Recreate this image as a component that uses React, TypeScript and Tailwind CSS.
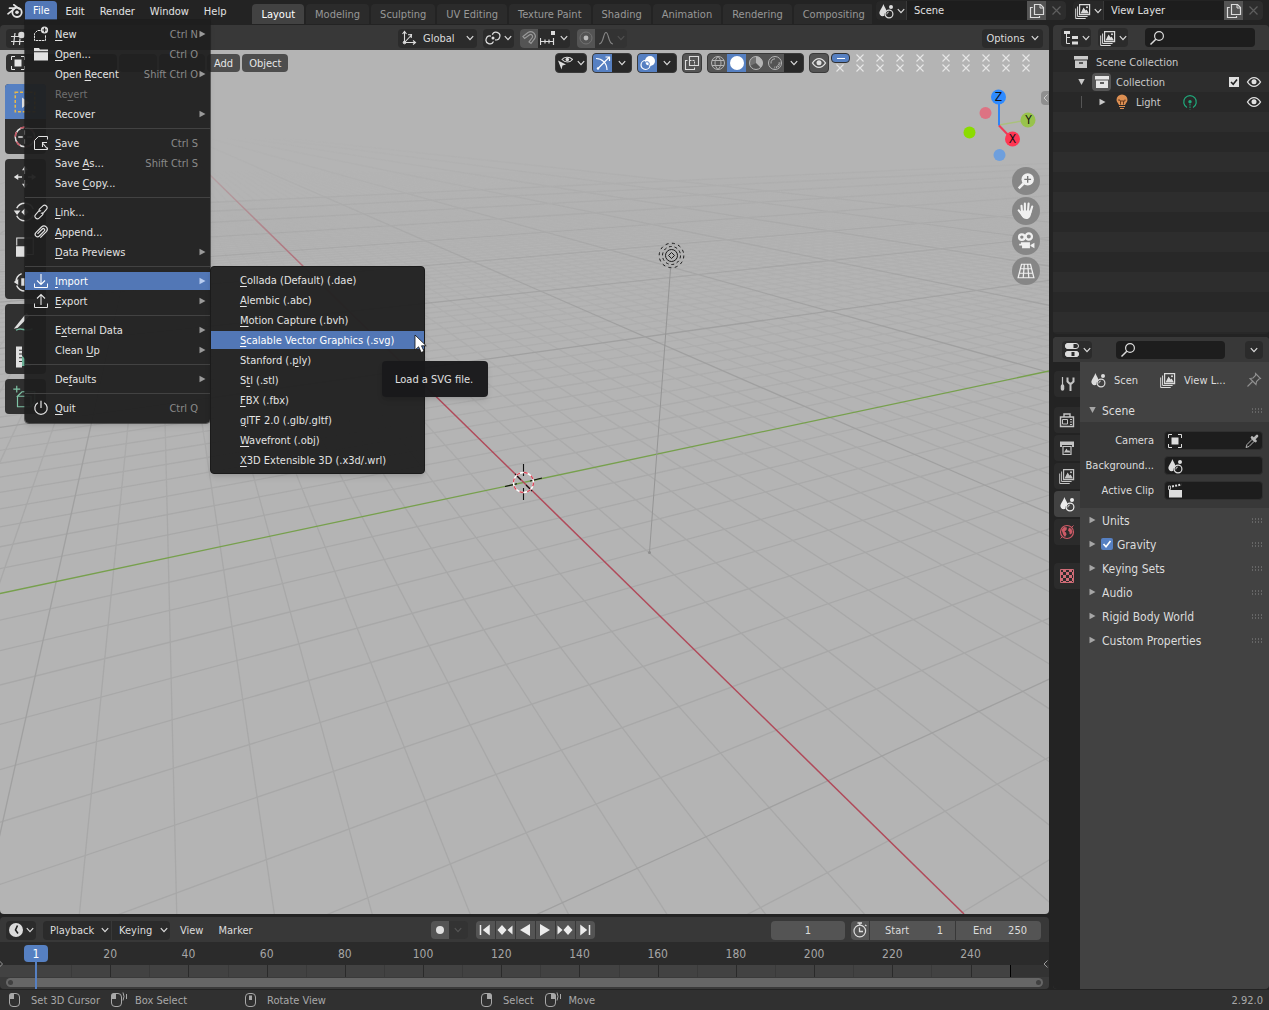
import type { ReactNode } from "react";

type IconProps = { className?: string };

function Svg({
  children,
  className = "",
  size = 16,
}: {
  children: ReactNode;
  className?: string;
  size?: number;
}) {
  return (
    <svg
      width={size}
      height={size}
      viewBox="0 0 16 16"
      fill="none"
      stroke="currentColor"
      strokeWidth="1"
      aria-hidden="true"
      className={`shrink-0 ${className}`}
    >
      {children}
    </svg>
  );
}

function Chevron({ className = "" }: IconProps) {
  return (
    <svg
      width="8"
      height="6"
      viewBox="0 0 8 6"
      fill="none"
      stroke="currentColor"
      strokeWidth="1.2"
      aria-hidden="true"
      className={`shrink-0 ${className}`}
    >
      <path d="M.8 1.2 4 4.600 7.200 1.2" />
    </svg>
  );
}

function Triangle({ className = "" }: IconProps) {
  return (
    <svg width="7" height="8" viewBox="0 0 7 8" aria-hidden="true" className={`shrink-0 ${className}`}>
      <path d="M0.5 0.8 6.5 4 0.5 7.2Z" fill="currentColor" />
    </svg>
  );
}

/* ---------- icons ---------- */

const SceneIcon = ({ className }: IconProps) => (
  <Svg className={className}>
    <path d="M5.5 1C6 3.5 9 6.5 8.2 8.5 7 9.5 6.2 10.6 6.4 12.8 3.5 14 1 12 1.4 9.2 2 7 4.5 4 5.5 1Z" fill="currentColor" stroke="none" />
    <circle cx="11" cy="11" r="3.9" strokeWidth="1.2" />
    <path d="M8.8 11.4a2.3 2.3 0 0 1 2-2.4" strokeWidth=".9" />
    <circle cx="13" cy="4" r="2" fill="currentColor" stroke="none" />
  </Svg>
);

const LayersIcon = ({ className }: IconProps) => (
  <Svg className={className}>
    <path d="M4.6 1.6h10v10h-10z" strokeWidth="1.2" />
    <path d="M2.6 3.5v10h10M.7 5.5v10h10" />
    <path d="M5.5 10.5 8.6 4.4l2 3.2 1-1.2 2.4 4.1Z" fill="currentColor" stroke="none" />
    <circle cx="12" cy="4.2" r="1" fill="currentColor" stroke="none" />
  </Svg>
);

const CopyIcon = () => (
  <Svg>
    <path d="M5.5 1.5h6l3 3v7h-9z" strokeWidth="1.2" />
    <path d="M11 1.5v3.5h3.5" />
    <path d="M3.8 4.5H1.5v10h9v-1.4" strokeWidth="1.2" />
  </Svg>
);

const SearchIcon = () => (
  <Svg>
    <circle cx="10" cy="6" r="4.4" strokeWidth="1.2" />
    <path d="M6.8 9.2 1.5 14.5" strokeWidth="1.5" />
  </Svg>
);

const EyeIcon = ({ className }: IconProps) => (
  <Svg className={className}>
    <path d="M1.5 8C3.5 4.8 5.6 3.6 8 3.6S12.500 4.8 14.500 8C12.500 11.200 10.400 12.400 8 12.400S3.500 11.200 1.500 8Z" strokeWidth="1.4" />
    <circle cx="8" cy="7.800" r="2.500" fill="currentColor" stroke="none" />
  </Svg>
);

const ObjectIcon = () => (
  <Svg>
    <path d="M4.500 4.500h7v7h-7z" fill="currentColor" stroke="none" />
    <path d="M1.500 5V1.500H5M11 1.500h3.500V5M14.500 11v3.500H11M5 14.500H1.500V11" />
  </Svg>
);

const CollectionIcon = () => (
  <Svg>
    <path d="M1 2h14v3.500H1zM2 6.500h12V14H2z" fill="currentColor" stroke="none" />
    <path d="M6 9h4" stroke="#303030" strokeWidth="1.600" />
  </Svg>
);

const menuIcons: Record<string, ReactNode> = {
  new: (
    <Svg>
      <path d="M7.500 4.500H4.500L1.500 7.500v7h11V9" strokeWidth="1" strokeDasharray="2.500 .6" />
      <circle cx="11.500" cy="4" r="3.600" fill="currentColor" stroke="none" />
      <path d="M11.500 1.800v4.400M9.300 4h4.400" stroke="#242424" strokeWidth="1.200" />
    </Svg>
  ),
  open: (
    <Svg>
      <path d="M1 2h5l1 1.500h8v1.700H1zM1 6.200h14V14.500H1z" fill="currentColor" stroke="none" />
    </Svg>
  ),
  save: (
    <Svg>
      <path d="M14.500 4.500v-3h-9l-4 4v9h13v-2" />
      <path d="M14 13.500 10 8.500M9.500 12V7.500H14" strokeWidth="1.100" />
    </Svg>
  ),
  link: (
    <Svg>
      <path d="M6.500 7.500C5.800 6.500 6 5.500 6.700 4.800L9.900 1.900c1-.9 2.400-.9 3.400.1s1 2.400.1 3.400L10.600 8.600C9.800 9.300 8.800 9.500 7.900 9" strokeWidth="1.100" />
      <path d="M9.500 8.500c.7 1 .5 2-.2 2.700L6.100 14.100c-1 .9-2.400.9-3.400-.1s-1-2.400-.1-3.400L5.400 7.400C6.200 6.700 7.200 6.500 8.100 7" strokeWidth="1.100" />
    </Svg>
  ),
  append: (
    <Svg>
      <path d="M4.500 9.800 9.300 5c1.300-1.300 3.200.5 2 1.900L6.300 12c-2.300 2.200-5.600-.9-3.400-3.300L8.500 3c3.200-3 7.700 1.100 4.800 4.600L7.300 13.700" strokeWidth="1.200" />
    </Svg>
  ),
  import: (
    <Svg>
      <path d="M8 1v10M4 7.500 8 11.500 12 7.500" strokeWidth="1.100" />
      <path d="M1.500 10.500v4h13v-4" strokeWidth="1" />
    </Svg>
  ),
  export: (
    <Svg>
      <path d="M8 12V1.500M4 5.500 8 1.500 12 5.500" strokeWidth="1.100" />
      <path d="M1.500 10.500v4h13v-4" strokeWidth="1" />
    </Svg>
  ),
  quit: (
    <Svg>
      <path d="M8 .8V8M4.800 2.800a6.200 6.200 0 1 0 6.400 0" strokeWidth="1.200" />
    </Svg>
  ),
};

/* ---------- menus ---------- */

type MenuItem = {
  label: string;
  mark?: number;
  icon?: string;
  keys?: string;
  sub?: boolean;
  disabled?: boolean;
};

const fileMenu: MenuItem[][] = [
  [
    { label: "New", mark: 0, icon: "new", keys: "Ctrl N", sub: true },
    { label: "Open...", mark: 0, icon: "open", keys: "Ctrl O" },
    { label: "Open Recent", mark: 5, keys: "Shift Ctrl O", sub: true },
    { label: "Revert", mark: 2, disabled: true },
    { label: "Recover", sub: true },
  ],
  [
    { label: "Save", mark: 0, icon: "save", keys: "Ctrl S" },
    { label: "Save As...", mark: 5, keys: "Shift Ctrl S" },
    { label: "Save Copy...", mark: 5 },
  ],
  [
    { label: "Link...", mark: 0, icon: "link" },
    { label: "Append...", mark: 0, icon: "append" },
    { label: "Data Previews", mark: 0, sub: true },
  ],
  [
    { label: "Import", mark: 0, icon: "import", sub: true },
    { label: "Export", mark: 0, icon: "export", sub: true },
  ],
  [
    { label: "External Data", mark: 1, sub: true },
    { label: "Clean Up", mark: 6, sub: true },
  ],
  [{ label: "Defaults", mark: 2, sub: true }],
  [{ label: "Quit", mark: 0, icon: "quit", keys: "Ctrl Q" }],
];

const importMenu: MenuItem[] = [
  { label: "Collada (Default) (.dae)", mark: 0 },
  { label: "Alembic (.abc)", mark: 0 },
  { label: "Motion Capture (.bvh)", mark: 0 },
  { label: "Scalable Vector Graphics (.svg)", mark: 0 },
  { label: "Stanford (.ply)", mark: 11 },
  { label: "Stl (.stl)", mark: 1 },
  { label: "FBX (.fbx)", mark: 0 },
  { label: "glTF 2.0 (.glb/.gltf)", mark: 0 },
  { label: "Wavefront (.obj)", mark: 0 },
  { label: "X3D Extensible 3D (.x3d/.wrl)", mark: 0 },
];

function MarkedLabel({ label, mark }: { label: string; mark?: number }) {
  if (mark === undefined) return <span>{label}</span>;
  return (
    <span>
      {label.slice(0, mark)}
      <u className="underline decoration-1 underline-offset-2">{label[mark]}</u>
      {label.slice(mark + 1)}
    </span>
  );
}

function ImportMenu() {
  return (
    <div className="absolute left-full -top-[5px] flex w-[215px] flex-col gap-[2px] rounded border border-[#1b1b1b] bg-[#242424]/98 py-1 shadow-md">
      {importMenu.map((item) => {
        const active = item.label.startsWith("Scalable");
        return (
          <button
            key={item.label}
            className={`relative flex h-[18px] w-full items-center pl-[29px] text-left whitespace-nowrap ${
              active ? "z-10 bg-[#5277b6] text-white" : "text-[#e3e3e3]"
            }`}
          >
            <MarkedLabel label={item.label} mark={item.mark} />
            {active && (
              <>
                <span
                  role="tooltip"
                  className="absolute top-[30px] left-[171px] flex h-9 items-center rounded bg-[#1a1a1c]/98 pr-[15px] pl-[13px] text-[#e0e0e0] shadow-md"
                >
                  Load a SVG file.
                </span>
                <svg width="13" height="20" viewBox="0 0 13 20" aria-hidden="true" className="absolute top-[3px] left-[203px]">
                  <path d="M1 1v15l3.600-3.200L7.200 18.500l2.800-1.200L7.500 11.800h4.700Z" fill="#fff" stroke="#111" strokeWidth=".8" />
                </svg>
              </>
            )}
          </button>
        );
      })}
    </div>
  );
}

function FileMenu() {
  return (
    <div className="absolute top-full left-0 z-20 w-[185px] rounded-b bg-[#1f1f1f]/95 pt-1 pb-[5px] shadow-md ring-1 ring-[#1b1b1b]/60">
      {fileMenu.map((group, i) => (
        <div key={i}>
          {i > 0 && <div className="mt-1 mb-1 h-px bg-[#424242]" />}
          {group.map((item) => {
            const active = item.label === "Import";
            return (
              <div key={item.label} className="relative py-px">
                <button
                  disabled={item.disabled}
                  className={`flex h-[18px] w-full items-center pr-1 pl-2 ${
                    active ? "bg-[#5277b6] text-white" : item.disabled ? "text-[#707070]" : "text-[#e3e3e3]"
                  }`}
                >
                  <span className="flex w-[22px]">{item.icon && menuIcons[item.icon]}</span>
                  <MarkedLabel label={item.label} mark={item.mark} />
                  <span className="mr-px ml-auto text-[#8a8a8a]">{item.keys}</span>
                  <span className={`w-[7px] ${active ? "text-[#b9cdf0]" : "text-[#9a9a9a]"}`}>
                    {item.sub && <Triangle />}
                  </span>
                </button>
                {active && <ImportMenu />}
              </div>
            );
          })}
        </div>
      ))}
    </div>
  );
}

/* ---------- top bar ---------- */

const workspaces = [
  "Layout",
  "Modeling",
  "Sculpting",
  "UV Editing",
  "Texture Paint",
  "Shading",
  "Animation",
  "Rendering",
  "Compositing",
];

function DataSelector({ icon, value, label }: { icon: ReactNode; value: string; label: string }) {
  return (
    <div className="flex h-[19px] overflow-hidden rounded bg-[#1d1d1d] text-[#dcdcdc]">
      <button aria-label={`Browse ${label}`} className="flex w-[31px] items-center justify-center gap-[3px] border-r border-[#383838] bg-[#282828]">
        {icon}
        <Chevron />
      </button>
      <input aria-label={label} defaultValue={value} className="w-[120px] bg-[#1d1d1d] px-[7px] text-[#e0e0e0] outline-none" />
      <button aria-label={`New ${label}`} className="flex w-[19px] items-center justify-center bg-[#545454]">
        <CopyIcon />
      </button>
      <button aria-label={`Remove ${label}`} className="flex w-5 items-center justify-center bg-[#2d2d2d] text-[#5e5e5e]">
        <svg width="9" height="9" viewBox="0 0 9 9" stroke="currentColor" strokeWidth="1.200" aria-hidden="true">
          <path d="M.5.5l8 8M8.500.5l-8 8" />
        </svg>
      </button>
    </div>
  );
}

function TopBar() {
  return (
    <header className="flex h-[25px] shrink-0 bg-[#232323] text-[#e3e3e3]">
      <button aria-label="Blender" className="flex h-[22px] w-[25px] items-center justify-end pr-[2px]">
        <Svg>
          <path d="M1 10.800 8.200 5.200H2.500M6.800 1.800l5.500 4.200" strokeWidth="1.700" strokeLinecap="round" />
          <circle cx="10" cy="9.300" r="4.700" strokeWidth="1.800" />
          <circle cx="10" cy="9.300" r="1.800" fill="currentColor" stroke="none" />
        </Svg>
      </button>
      <nav className="flex h-[22px] gap-px">
        <div className="relative h-5 pt-px">
          <button className="h-[19px] rounded-t bg-[#5277b6] px-2 text-white">File</button>
          <FileMenu />
        </div>
        {["Edit", "Render", "Window", "Help"].map((m) => (
          <button key={m} className="px-[7px]">
            {m}
          </button>
        ))}
      </nav>
      <div className="ml-[19px] flex min-w-0 flex-1 items-start gap-[2px] overflow-hidden pt-1">
        {workspaces.map((w) => (
          <button
            key={w}
            className={`h-5 shrink-0 rounded-t px-[9px] ${
              w === "Layout" ? "bg-[#424242] text-white" : "bg-[#2b2b2b] text-[#989898]"
            }`}
          >
            {w}
          </button>
        ))}
      </div>
      <div className="flex shrink-0 gap-[7px] pt-px pr-[6px] pl-1">
        <DataSelector icon={<SceneIcon />} value="Scene" label="Scene" />
        <DataSelector icon={<LayersIcon />} value="View Layer" label="View Layer" />
      </div>
    </header>
  );
}

/* ---------- 3D viewport ---------- */

const origin = { x: 523, y: 482 };
const vanishX = { x: 158, y: 124 };
const vanishY = { x: 2300, y: 105 };

// point at `t` units from the origin, on the axis that runs to `v`
function project(v: { x: number; y: number }, w: number, t: number) {
  const k = (w * t) / (1 + w * t);
  return { x: origin.x + k * (v.x - origin.x), y: origin.y + k * (v.y - origin.y) };
}

function floorLines(v: { x: number; y: number }, w: number, from: number, to: number, target: { x: number; y: number }) {
  const out: { t: number; x1: number; y1: number; x2: number; y2: number }[] = [];
  for (let t = from; t <= to; t++) {
    if (t === 0) continue;
    const p = project(v, w, t);
    const far = 6;
    out.push({
      t,
      x1: target.x,
      y1: target.y,
      x2: target.x + (p.x - target.x) * far,
      y2: target.y + (p.y - target.y) * far,
    });
  }
  return out;
}

const floor = [
  ...floorLines(vanishX, -0.0455, -80, 16, vanishY),
  ...floorLines(vanishY, 0.0208, -38, 60, vanishX),
];

function Scene() {
  const minor = floor.filter((l) => l.t % 10 !== 0);
  const major = floor.filter((l) => l.t % 10 === 0);
  return (
    <svg
      viewBox="0 50 1049 864"
      preserveAspectRatio="xMinYMin slice"
      className="absolute inset-0 h-full w-full"
      aria-hidden="true"
    >
      <defs>
        <linearGradient id="nearFade" gradientUnits="userSpaceOnUse" x1="0" y1="170" x2="0" y2="520">
          <stop offset="0" stopColor="#000" />
          <stop offset=".3" stopColor="#555" />
          <stop offset="1" stopColor="#fff" />
        </linearGradient>
        <linearGradient id="farFade" gradientUnits="userSpaceOnUse" x1="0" y1="138" x2="0" y2="330">
          <stop offset="0" stopColor="#000" />
          <stop offset=".5" stopColor="#777" />
          <stop offset="1" stopColor="#fff" />
        </linearGradient>
        <mask id="nearMask" maskUnits="userSpaceOnUse" x="0" y="0" width="1400" height="1400">
          <rect width="1400" height="1400" fill="url(#nearFade)" />
        </mask>
        <mask id="farMask" maskUnits="userSpaceOnUse" x="0" y="0" width="1400" height="1400">
          <rect width="1400" height="1400" fill="url(#farFade)" />
        </mask>
      </defs>
      <g mask="url(#nearMask)" stroke="#a8a8a8" strokeWidth="1.300">
        {minor.map((l, i) => (
          <line key={i} x1={l.x1} y1={l.y1} x2={l.x2} y2={l.y2} />
        ))}
      </g>
      <g mask="url(#farMask)">
        {major.map((l, i) => (
          <line key={i} x1={l.x1} y1={l.y1} x2={l.x2} y2={l.y2} stroke="#a0a0a0" strokeWidth="1.300" />
        ))}
        <path d="M0 593.500 1049 371" stroke="#77a04d" strokeWidth="1.300" />
        <path d="M158 124 964 914" stroke="#b04a5a" strokeWidth="1.500" />
      </g>
      {/* light and its drop line */}
      <path d="M670.500 269 649.500 552" stroke="#959595" />
      <circle cx="649.500" cy="552.500" r="1.500" fill="#8e8e8e" />
      <g fill="none" stroke="#1c1c1c">
        <path d="M671.500 252.500l3 3-3 3-3-3Z" />
        <circle cx="671.500" cy="255.500" r="6" />
        <circle cx="671.500" cy="255.500" r="9" strokeDasharray="3 2.650" />
        <circle cx="671.500" cy="255.500" r="12.300" strokeDasharray="3 3.440" />
      </g>
      {/* 3D cursor */}
      <path d="M523.500 464v12M523.500 488v12M505 486.500l12-2.700M530 481l12-3M515 474l6 6M526 485l6 6" stroke="#111" strokeWidth="1.100" />
      <circle cx="523.500" cy="482.500" r="10" fill="none" stroke="#fff" strokeWidth="1.400" />
      <circle cx="523.500" cy="482.500" r="10" fill="none" stroke="#d94a5a" strokeWidth="1.400" strokeDasharray="3.930 3.930" />
    </svg>
  );
}

function ViewportHeader() {
  return (
    <div className="flex h-[25px] shrink-0 items-center rounded-t bg-[#383838] pt-px pr-[6px] pl-[6px] text-[#dcdcdc]">
      <div className="flex w-[392px] items-center">
        <button aria-label="Editor type" className="flex h-[19px] w-[30px] items-center gap-1 rounded bg-[#2b2b2b] pl-1">
          <Svg>
            <path d="M1 6.500h8M1 11.500h13M5 3 3.500 15M10 8.500 9.500 15" strokeWidth="1.200" />
            <circle cx="11.500" cy="5" r="3.300" fill="currentColor" stroke="none" />
          </Svg>
        </button>
      </div>
      <label className="relative flex h-[19px] items-center rounded bg-[#2b2b2b]">
        <Svg className="pointer-events-none absolute left-[3px]">
          <path d="M3.500 2v10.500H14M1.500 4 3.500 1.500 5.500 4M12 10.500l2.500 2-2.500 2M3.500 12.500 10 5.500M7 4.800l3.500-.3-.3 3.500" strokeWidth="1.100" />
          <circle cx="3.500" cy="12.500" r="1.300" fill="currentColor" />
        </Svg>
        <select aria-label="Transform orientation" className="h-[19px] w-[79px] appearance-none bg-transparent pl-[25px] outline-none">
          <option>Global</option>
        </select>
        <Chevron className="pointer-events-none absolute right-[3px]" />
      </label>
      <button aria-label="Pivot point" className="ml-[6px] flex h-[19px] w-[31px] items-center justify-center gap-[3px] rounded bg-[#2b2b2b]">
        <Svg>
          <path d="M8.500 11.500A3.900 3.900 0 1 1 6 6.200M7.300 4.700A3.900 3.900 0 1 1 10 9.800" strokeWidth="1.200" />
          <circle cx="8" cy="8" r="1.500" fill="currentColor" stroke="none" />
        </Svg>
        <Chevron />
      </button>
      <div className="ml-[6px] flex h-[19px] overflow-hidden rounded bg-[#2b2b2b]">
        <button aria-label="Snap" className="flex w-[18px] items-center justify-center bg-[#545454] text-[#999]">
          <Svg>
            <path d="M2 6.500 7 2.500c5-3 9.500 3 6 7L10 13.500 8 11.800l3-3.800c1.500-2.300-.5-4.500-2.700-3L3.600 8.400Z" strokeWidth="1.200" />
          </Svg>
        </button>
        <button aria-label="Snap to" className="flex w-8 items-center justify-center gap-[4px]">
          <Svg>
            <path d="M.5 11.500h13M.5 8v7M5 9.500v4M9 9.500v4M13.500 8v7" strokeWidth="1.200" />
            <path d="M11 1h4v4h-4z" fill="currentColor" stroke="none" />
          </Svg>
          <Chevron />
        </button>
      </div>
      <div className="ml-[7px] flex h-[19px] overflow-hidden rounded bg-[#333]">
        <button aria-label="Proportional editing" className="flex w-[18px] items-center justify-center bg-[#545454] text-[#727272]">
          <Svg>
            <circle cx="8" cy="8" r="6" />
            <circle cx="8" cy="8" r="2.400" fill="#bbb" stroke="none" />
          </Svg>
        </button>
        <button aria-label="Falloff" className="flex w-8 items-center justify-center gap-[3px] text-[#858585]">
          <Svg>
            <path d="M1 14C6 14 5 2.500 8 2.500S10 14 15 14" strokeWidth="1.200" />
          </Svg>
          <Chevron className="text-[#505050]" />
        </button>
      </div>
      <button className="ml-auto flex h-[19px] w-[61px] items-center justify-center gap-[6px] rounded bg-[#2b2b2b]">
        Options
        <Chevron />
      </button>
    </div>
  );
}

function Cross() {
  return (
    <svg width="8" height="8" viewBox="0 0 8 8" stroke="#e6e6e6" strokeWidth="1.100" aria-hidden="true">
      <path d="M.5.5l7 7M7.500.5l-7 7" />
    </svg>
  );
}

function LayerButtons() {
  const block = (first: boolean) => (
    <div className="grid grid-cols-5 gap-x-3 gap-y-[2px]">
      {Array.from({ length: 10 }, (_, i) => (
        <button key={i} aria-label="Layer" className="relative flex h-2 w-2 items-center justify-center">
          {first && i === 0 ? (
            <span className="absolute -top-px -left-[5px] flex h-[10px] w-[19px] items-center justify-center rounded border border-[#303030] bg-[#5680c2]">
              <span className="h-px w-2 bg-white" />
            </span>
          ) : (
            <Cross />
          )}
        </button>
      ))}
    </div>
  );
  return (
    <div className="ml-[7px] flex gap-[18px]">
      {block(true)}
      {block(false)}
    </div>
  );
}

function ViewportTools() {
  const group = "flex h-5 overflow-hidden rounded border border-[#3a3a3a] bg-[#282828] text-[#dcdcdc]";
  const cell = "flex w-[19px] items-center justify-center";
  return (
    <div className="relative flex items-center pt-[3px] pr-[19px] pl-[6px]">
      <div className="flex gap-[2px] text-[#e6e6e6]">
        <button aria-label="Interaction mode" className="flex h-[18px] w-[111px] items-center rounded bg-[#303030] pl-1">
          <ObjectIcon />
        </button>
        <button aria-label="View" className="h-[18px] w-[38px] rounded bg-[#4d4d4d]" />
        <button aria-label="Select" className="h-[18px] w-[46px] rounded bg-[#4d4d4d]" />
        <button className="h-[18px] rounded bg-[#4d4d4d] px-[7px]">Add</button>
        <button className="h-[18px] rounded bg-[#4d4d4d] px-[7px]">Object</button>
      </div>
      <div className="ml-auto flex items-center">
        <button aria-label="Object types" className={`${group} w-8 items-center justify-center gap-1`}>
          <Svg>
            <path d="M5 4.500C7 1.800 12.500 1.300 15.500 4.500 13 7.800 8 7.800 5 4.500Z" strokeWidth="1.100" />
            <circle cx="10.300" cy="4.500" r="1.800" fill="currentColor" stroke="none" />
            <path d="M1 5.500 9 9.500 5.500 10.500 4.500 14.500Z" fill="currentColor" stroke="none" />
          </Svg>
          <Chevron />
        </button>
        <div className={`${group} ml-[5px]`}>
          <button aria-label="Gizmos" className={`${cell} bg-[#5680c2] text-white`}>
            <Svg>
              <path d="M1 3.500C7 3.500 12 8 12 15M3 13.500 14 2.500M10.500 2h4v4" strokeWidth="1.200" />
              <circle cx="3" cy="13.500" r="1.200" fill="currentColor" stroke="none" />
            </Svg>
          </button>
          <button aria-label="Gizmo options" className={cell}>
            <Chevron />
          </button>
        </div>
        <div className={`${group} ml-[5px]`}>
          <button aria-label="Overlays" className={`${cell} bg-[#5680c2] text-white`}>
            <Svg>
              <circle cx="10" cy="6" r="5" fill="currentColor" stroke="none" />
              <circle cx="5.500" cy="10" r="4.500" strokeWidth="1.200" />
              <circle cx="7" cy="9" r="2.300" stroke="#5680c2" />
            </Svg>
          </button>
          <button aria-label="Overlay options" className={cell}>
            <Chevron />
          </button>
        </div>
        <button aria-label="Toggle X-ray" className="ml-[5px] flex h-5 w-5 items-center justify-center rounded border border-[#3a3a3a] bg-[#545454] text-[#dcdcdc]">
          <Svg>
            <path d="M5.500 1.500h9v9h-9zM3.500 5.500h-2v9h9v-2" strokeWidth="1.100" />
            <path d="M5.500 5.500h5v5" strokeDasharray="2 1" />
          </Svg>
        </button>
        <div className={`${group} ml-[5px]`}>
          <button aria-label="Wireframe" className={`${cell} bg-[#545454] text-[#b5b5b5]`}>
            <Svg>
              <circle cx="8" cy="8" r="6.500" />
              <path d="M8 1.500c-4 4-4 9 0 13M8 1.500c4 4 4 9 0 13M2 5.500h12M2 10.500h12" />
            </Svg>
          </button>
          <button aria-label="Solid" className={`${cell} bg-[#5680c2] text-white`}>
            <Svg>
              <circle cx="8" cy="8" r="7" fill="currentColor" stroke="none" />
            </Svg>
          </button>
          <button aria-label="Material preview" className={`${cell} bg-[#545454] text-[#b5b5b5]`}>
            <Svg>
              <circle cx="8" cy="8" r="6.500" />
              <path d="M8 8V1.500A6.500 6.500 0 0 0 2 11L8 8Z" fill="currentColor" stroke="none" opacity=".3" />
              <path d="M8 8V1.500A6.500 6.500 0 0 1 12.600 12.600Z" fill="currentColor" stroke="none" />
            </Svg>
          </button>
          <button aria-label="Rendered" className={`${cell} bg-[#545454] text-[#b5b5b5]`}>
            <Svg>
              <circle cx="8" cy="8" r="6.500" />
              <path d="M4 8.500A4.500 4.500 0 0 1 8 3.800" />
              <path d="M12.500 7.500c0 3-2 5-5 5" strokeWidth="2" strokeDasharray="1 .8" />
            </Svg>
          </button>
          <button aria-label="Shading options" className={cell}>
            <Chevron />
          </button>
        </div>
        <button aria-label="Local collections" className="ml-[5px] flex h-5 w-5 items-center justify-center rounded border border-[#3a3a3a] bg-[#545454] text-[#e0e0e0]">
          <EyeIcon />
        </button>
        <LayerButtons />
      </div>
    </div>
  );
}

const toolGroups: ReactNode[][] = [
  [
    <Svg size={24} key="select">
      <path d="M1.500 1.500h13v13h-13z" stroke="#e6b74c" strokeDasharray="2 1.200" />
      <path d="M6 5v7l5-3.500Z" fill="currentColor" stroke="none" />
    </Svg>,
    <Svg size={24} key="cursor">
      <circle cx="8" cy="8" r="6.500" />
      <circle cx="8" cy="8" r="6.500" stroke="#c65361" strokeDasharray="3.400 3.400" />
      <path d="M3.500 8h3M9.500 8h3M8 3.500v3M8 9.500v3" />
    </Svg>,
  ],
  [
    <Svg size={24} key="move">
      <path d="M2 8h4M10 8h4M8 2v4M8 10v4" />
      <path d="M.5 8 3.500 6v4ZM15.500 8l-3-2v4ZM8 .5 6 3.500h4ZM8 15.500l-2-3h4Z" fill="currentColor" stroke="none" />
    </Svg>,
    <Svg size={24} key="rotate">
      <path d="M2.500 10.500A6 6 0 0 0 13.500 10M2.500 5.500A6 6 0 0 1 13.500 6" />
      <path d="M.5 7h4.500L2.700 10ZM8 5.500 10.500 8 8 10.500 5.500 8Z" fill="currentColor" stroke="none" />
    </Svg>,
    <Svg size={24} key="scale">
      <path d="M2.500 7V2h11v11H9" strokeWidth=".7" />
      <path d="M2 7.500h7v7H2z" fill="currentColor" stroke="none" />
    </Svg>,
    <Svg size={24} key="transform">
      <circle cx="8" cy="8" r="6" strokeDasharray="7 2.400" />
      <path d="M5.500 5.500h5v5h-5zM.5 8l3-2v4Z" fill="currentColor" stroke="none" />
    </Svg>,
  ],
  [
    <Svg size={24} key="annotate">
      <path d="M.5 12.500 9 2l2 2L3 12Z" fill="currentColor" stroke="none" />
      <path d="M2 13.500c4-3 6 2 11-1" stroke="#6fb59a" />
    </Svg>,
    <Svg size={24} key="measure">
      <path d="M2 1h4v14H2z" fill="currentColor" stroke="none" />
      <path d="M4 3.500h3M4 6h3M4 8.500h3M4 11h3" stroke="#333" strokeWidth=".7" />
      <path d="M6 14V7l6 7Z" fill="#6fb59a" stroke="none" />
    </Svg>,
  ],
  [
    <Svg size={24} key="add">
      <path d="M2.500 5V.5M.2 2.700h4.600M3 7.500v7h9v-7H3L6 4.500h8.500v7l-2.500 3" stroke="#7fc4a6" strokeWidth=".8" />
    </Svg>,
  ],
];

function Toolbar() {
  return (
    <div className="relative mt-[11px] flex w-[46px] flex-col gap-[5px] pl-[5px]">
      {toolGroups.map((group, i) => (
        <div key={i} className="w-[41px] overflow-hidden rounded bg-[#303030] text-[#e0e0e0]">
          {group.map((icon, j) => (
            <button
              key={j}
              aria-label="Tool"
              className={`flex h-[35px] w-full items-center pl-2 ${i === 0 && j === 0 ? "bg-[#5680c2]" : ""}`}
            >
              {icon}
            </button>
          ))}
        </div>
      ))}
    </div>
  );
}

function NavGizmo() {
  const btn = "flex h-7 w-7 items-center justify-center rounded-full bg-[#868686] text-[#f0f0f0]";
  return (
    <>
      <svg
        width="84"
        height="80"
        viewBox="960 85 84 80"
        className="absolute top-[35px] right-[5px] text-xs"
        textAnchor="middle"
        aria-hidden="true"
      >
        <path d="M999 125 1028 120" stroke="#a3c95a" strokeWidth="1.500" opacity=".6" />
        <circle cx="985.500" cy="113" r="6" fill="#dd7383" />
        <circle cx="969.500" cy="132.500" r="6" fill="#8bdc00" />
        <circle cx="999.500" cy="155" r="6" fill="#6e9fdd" />
        <path d="M999 97V125.500" stroke="#2e84f5" strokeWidth="2" />
        <path d="M999 125.500 1012 139" stroke="#f03a57" strokeWidth="2" />
        <circle cx="1028" cy="120" r="7.500" fill="#98c34c" />
        <circle cx="998.500" cy="97" r="7.500" fill="#2e8bff" />
        <circle cx="1012.500" cy="139" r="7.500" fill="#ff3653" />
        <text x="998.500" y="101" fill="#111">Z</text>
        <text x="1028.500" y="124" fill="#111">Y</text>
        <text x="1012.500" y="143" fill="#111">X</text>
      </svg>
      <button aria-label="Show sidebar" className="absolute top-[41px] right-0 flex h-[14px] w-2 items-center justify-center rounded-l bg-[#8f8f8f]">
        <svg width="5" height="8" viewBox="0 0 5 8" fill="none" stroke="#c9c9c9" aria-hidden="true">
          <path d="M4.500.5 1 4l3.500 3.500" />
        </svg>
      </button>
      <div className="absolute top-[117px] right-[9px] flex flex-col gap-[2px]">
        <button aria-label="Zoom" className={btn}>
          <Svg size={18}>
            <circle cx="9.500" cy="6.500" r="5.500" fill="currentColor" stroke="none" />
            <path d="M6 10 1.500 14.500" strokeWidth="2.200" />
            <path d="M9.500 3.500v6M6.500 6.500h6" stroke="#777" strokeWidth="1.200" />
          </Svg>
        </button>
        <button aria-label="Pan" className={btn}>
          <Svg size={18}>
            <path d="M4.500 9.500 4 3.500M7 8V1.500M9.800 8l.5-6.500M12 9l1.500-5M1.500 7.500l4 5" strokeWidth="1.900" strokeLinecap="round" />
            <path d="M3.600 7.500h9.200c.2 3-1 7-3.500 7.500-2.800.3-4.500-1-5.700-4Z" fill="currentColor" stroke="none" />
          </Svg>
        </button>
        <button aria-label="Camera view" className={btn}>
          <Svg size={18}>
            <circle cx="4.300" cy="4.500" r="2.500" strokeWidth="2" />
            <circle cx="10.500" cy="4" r="2.800" strokeWidth="2" />
            <path d="M3.500 9h8v5.500h-7V12H2V10.500h1.500ZM12 11.500l3.500-2v5l-3.500-2Z" fill="currentColor" stroke="none" />
          </Svg>
        </button>
        <button aria-label="Perspective" className={btn}>
          <Svg size={18}>
            <path d="M4 2h8l3 12H1ZM3 6h10M2 10h12M6.500 2 5.500 14M9.500 2l1 12" strokeWidth="1.100" />
          </Svg>
        </button>
      </div>
    </>
  );
}

function Viewport() {
  return (
    <section className="flex min-h-0 flex-1 flex-col">
      <ViewportHeader />
      <div className="relative flex-1 overflow-hidden rounded-b bg-[#b4b4b4]">
        <Scene />
        <ViewportTools />
        <Toolbar />
        <NavGizmo />
      </div>
    </section>
  );
}

/* ---------- timeline ---------- */

const transport = [
  { label: "Jump to start", d: "M3.500 3v10M12 4 7 8l5 4Z" },
  { label: "Previous keyframe", d: "M5 3 .5 8 5 13 9.500 8ZM15.500 3.500 10.500 8l5 4.500Z" },
  { label: "Play backwards", d: "M13 2 3 8l10 6Z" },
  { label: "Play", d: "M3 2l10 6-10 6Z" },
  { label: "Next keyframe", d: "M.5 3.500 5.500 8l-5 4.500ZM11 3l4.500 5-4.500 5L6.500 8Z" },
  { label: "Jump to end", d: "M4 4l5 4-5 4ZM12.500 3v10" },
];

// frame number to a share of the timeline's width
const frameLeft = (frame: number) => `${3.05 + frame * 0.3728}%`;

function Timeline() {
  return (
    <section className="shrink-0 overflow-hidden rounded-t rounded-b bg-[#2b2b2b] text-[#dcdcdc]">
      <div className="flex h-[25px] items-center bg-[#383838] pt-px pr-2 pl-[6px]">
        <button aria-label="Editor type" className="flex h-[19px] w-[30px] items-center justify-center gap-[2px] rounded bg-[#2b2b2b]">
          <Svg>
            <circle cx="8" cy="8" r="7" fill="currentColor" stroke="none" />
            <path d="M9.500 3.500 7.500 8l2.500 3.500" stroke="#222" strokeWidth="1.600" />
          </Svg>
          <Chevron />
        </button>
        <div className="ml-[7px] flex h-[19px] gap-px">
          <button className="flex w-[68px] items-center justify-between rounded-l bg-[#2b2b2b] pr-[2px] pl-[7px]">
            Playback <Chevron />
          </button>
          <button className="flex w-[58px] items-center justify-between rounded-r bg-[#2b2b2b] pr-[2px] pl-[7px]">
            Keying <Chevron />
          </button>
        </div>
        <button className="ml-[3px] px-[7px]">View</button>
        <button className="px-2">Marker</button>
        <div className="flex flex-1 items-center justify-center pr-[6px]">
          <div className="flex h-[18px] overflow-hidden rounded">
            <button aria-label="Auto keying" className="flex w-[18px] items-center justify-center bg-[#545454]">
              <span className="h-2 w-2 rounded-full bg-[#e0e0e0]" />
            </button>
            <button aria-label="Auto keying options" className="flex w-[19px] items-center justify-center bg-[#333] text-[#555]">
              <Chevron />
            </button>
          </div>
          <div className="ml-2 flex h-[18px] gap-px overflow-hidden rounded">
            {transport.map((b) => (
              <button key={b.label} aria-label={b.label} className="flex w-[19px] items-center justify-center bg-[#545454] text-[#ececec]">
                <Svg>
                  <path d={b.d} fill="currentColor" strokeWidth={b.label.startsWith("Jump") ? 1.500 : 0} />
                </Svg>
              </button>
            ))}
          </div>
        </div>
        <input
          aria-label="Current frame"
          defaultValue="1"
          className="ml-auto h-[19px] w-[74px] rounded bg-[#545454] text-center outline-none"
        />
        <div className="ml-[6px] flex h-[19px] gap-px overflow-hidden rounded">
          <button aria-label="Use preview range" className="flex w-[18px] items-center justify-center bg-[#545454]">
            <Svg>
              <circle cx="7.800" cy="9" r="5.800" strokeWidth="1.200" />
              <path d="M7.500 5.500V9.500H11M5.500 1h4.500M7.800 1v2M13 3l1.500 1" strokeWidth="1.300" />
            </Svg>
          </button>
          <label className="flex w-[85px] items-center bg-[#545454] pr-3 pl-[15px]">
            Start
            <input defaultValue="1" className="w-full min-w-0 bg-transparent text-right outline-none" />
          </label>
          <label className="flex w-[85px] items-center bg-[#545454] pr-[14px] pl-[17px]">
            End
            <input defaultValue="250" className="w-full min-w-0 bg-transparent text-right outline-none" />
          </label>
        </div>
      </div>

      <div className="relative">
        <div className="h-[23px]" />
        <div className="h-3 bg-[#333]">
          <div className="h-full bg-[#424242]" style={{ width: frameLeft(250) }} />
        </div>
        <div className="h-3 bg-[#3a3a3a] px-[6px] pt-px">
          <div className="flex h-[9px] items-center justify-between rounded-full bg-[#666] px-[2px]">
            <span className="h-[5px] w-[5px] rounded-full bg-[#404040]" />
            <span className="h-[5px] w-[5px] rounded-full bg-[#404040]" />
          </div>
        </div>
        {Array.from({ length: 25 }, (_, i) => (i + 1) * 10).map((f) => (
          <span
            key={f}
            className={`absolute top-[23px] h-3 w-px ${f === 250 ? "bg-black" : f % 20 ? "bg-[#3a3a3a]" : "bg-[#2a2a2a]"}`}
            style={{ left: frameLeft(f) }}
          />
        ))}
        {Array.from({ length: 12 }, (_, i) => (i + 1) * 20).map((f) => (
          <span
            key={f}
            className="absolute top-1 -translate-x-1/2 text-xs leading-4 text-[#a6a6a6]"
            style={{ left: frameLeft(f) }}
          >
            {f}
          </span>
        ))}
        <span className="absolute top-[19px] h-7 w-[2px] -translate-x-1/2 bg-[#5680c2]" style={{ left: frameLeft(1) }} />
        <span
          className="absolute top-[3px] flex h-[17px] w-6 -translate-x-1/2 items-center justify-center rounded bg-[#5680c2] text-xs text-white"
          style={{ left: frameLeft(1) }}
        >
          1
        </span>
        <svg width="5" height="8" viewBox="0 0 5 8" fill="none" stroke="#9a9a9a" className="absolute top-[18px] left-0" aria-hidden="true">
          <path d="M-1 .5 2.500 4-1 7.500" />
        </svg>
        <svg width="5" height="8" viewBox="0 0 5 8" fill="none" stroke="#9a9a9a" className="absolute top-[18px] right-px" aria-hidden="true">
          <path d="M4.500.5 1 4l3.500 3.500" />
        </svg>
      </div>
    </section>
  );
}

/* ---------- outliner ---------- */

function Outliner() {
  return (
    <section className="flex h-[309px] shrink-0 flex-col overflow-hidden rounded bg-[#282828] text-[#c9c9c9]">
      <div className="flex h-[25px] shrink-0 items-center bg-[#383838] pr-[14px] pl-[8px] text-[#dcdcdc]">
        <button aria-label="Editor type" className="flex h-[19px] w-[30px] items-center justify-center gap-[3px] rounded bg-[#2b2b2b]">
          <Svg>
            <path d="M1 1h6v3H1zM9 6h6v3H9zM9 11.500h6v3H9z" fill="currentColor" stroke="none" />
            <path d="M3.500 4v9.500H7M3.500 7.500H7" />
          </Svg>
          <Chevron />
        </button>
        <button aria-label="Display mode" className="ml-[7px] flex h-[19px] w-[30px] items-center justify-center gap-[3px] rounded bg-[#2b2b2b]">
          <LayersIcon />
          <Chevron />
        </button>
        <label className="ml-auto flex h-[19px] w-[110px] items-center rounded bg-[#1d1d1d] pl-1">
          <SearchIcon />
          <input aria-label="Filter outliner" className="w-full min-w-0 bg-transparent px-1 outline-none" />
        </label>
      </div>
      <div className="flex h-[22px] items-center gap-[7px] pt-[2px] pl-[20px]">
        <CollectionIcon />
        Scene Collection
      </div>
      <div className="flex h-5 items-center bg-[#2d2d2d] pr-[7px] pl-[25px]">
        <Triangle className="rotate-90" />
        <span className="ml-[7px] flex h-[18px] w-[19px] items-center justify-center rounded bg-[#555] text-[#e6e6e6]">
          <CollectionIcon />
        </span>
        <label htmlFor="collection-on" className="ml-[5px]">
          Collection
        </label>
        <span className="relative ml-auto flex">
          <input id="collection-on" type="checkbox" defaultChecked className="h-[10px] w-[10px] appearance-none bg-[#e0e0e0]" />
          <svg width="10" height="10" viewBox="0 0 10 10" fill="none" stroke="#222" strokeWidth="1.600" className="pointer-events-none absolute inset-0" aria-hidden="true">
            <path d="M2 5 4.200 7.300 8 2.500" />
          </svg>
        </span>
        <EyeIcon className="ml-[7px] text-[#e0e0e0]" />
      </div>
      <div className="flex h-5 items-center pr-[7px] pl-[28px]">
        <span className="h-3 w-px bg-[#555]" />
        <Triangle className="ml-[17px]" />
        <Svg className="ml-2 text-[#dd8f52]">
          <path d="M8 .5A5.500 5.500 0 0 0 2.500 6C2.500 8 4.300 9 5 11h6c.7-2 2.500-3 2.500-5A5.500 5.500 0 0 0 8 .5Z" fill="currentColor" stroke="none" />
          <path d="M5 12.500h6M6 14.500h4" />
          <path d="M6.500 10.500V7h3v3.500M5 7V5.500l1.500 1.500M11 5.500V7H9.500" stroke="#5b3216" strokeWidth=".9" />
        </Svg>
        <span className="ml-[6px]">Light</span>
        <Svg className="ml-[21px] text-[#1fa87a]">
          <path d="M5 13.500A6.300 6.300 0 1 1 11 13.500" strokeWidth="1.200" />
          <circle cx="8" cy="7.800" r="1.700" fill="currentColor" stroke="none" />
          <path d="M8 10v5.500" strokeDasharray="1.500 1" />
        </Svg>
        <EyeIcon className="ml-auto text-[#e0e0e0]" />
      </div>
      {Array.from({ length: 11 }, (_, i) => (
        <div key={i} className={`h-5 shrink-0 ${i % 2 ? "bg-[#282828]" : "bg-[#2d2d2d]"}`} />
      ))}
    </section>
  );
}

/* ---------- properties ---------- */

const propertyTabs: { label: string; className: string; icon: ReactNode }[] = [
  {
    label: "Tool",
    className: "mt-[9px] bg-[#2b2b2b] text-[#c4c4c4]",
    icon: (
      <Svg>
        <path d="M3.500 1v8" strokeWidth="1.200" />
        <path d="M3.500 10v3" strokeWidth="3.500" strokeLinecap="round" />
        <path d="M8.500 1.500v4l2 2h2l2-2v-4M11.500 7v8" strokeWidth="2" />
      </Svg>
    ),
  },
  {
    label: "Render",
    className: "mt-[10px] bg-[#2b2b2b] text-[#c4c4c4]",
    icon: (
      <Svg>
        <path d="M1.500 5h13v9.500h-13zM5 5V2h6v3" strokeWidth="1.400" />
        <path d="M3.500 7.500h5v4.500h-5z" />
        <path d="M11 7.500h2M11 10h2M11 12.500h2" strokeWidth="1.200" />
      </Svg>
    ),
  },
  {
    label: "Output",
    className: "mt-[2px] bg-[#2b2b2b] text-[#c4c4c4]",
    icon: (
      <Svg>
        <path d="M1 1.500h14V7h-2V5H3v2H1z" fill="currentColor" stroke="none" />
        <path d="M4 6.500h8v8H4z" strokeWidth="1.200" />
        <path d="M5 12.500 7.500 8.500 9 11l1-1 1.500 2.500Z" fill="currentColor" stroke="none" />
      </Svg>
    ),
  },
  { label: "View Layer", className: "mt-[2px] bg-[#2b2b2b] text-[#c4c4c4]", icon: <LayersIcon /> },
  { label: "Scene", className: "mt-[2px] bg-[#424242] text-[#ececec]", icon: <SceneIcon /> },
  {
    label: "World",
    className: "mt-[2px] bg-[#2b2b2b] text-[#cc5a66]",
    icon: (
      <Svg>
        <circle cx="8" cy="8" r="6.500" strokeWidth="1.200" />
        <path d="M2.500 6 5 3l3 .5-.5 2.500-2 1.500 1.500 1 .5 2L6 13C3.500 10.500 4 9 2.500 6ZM10 3.500l2.500 1.500L13.500 8 12 10.500l-1.500-.5V8L9 6.500Z" fill="currentColor" stroke="none" />
        <path d="M14.500 1.500 13 3M1.500 14.500 3 13" />
      </Svg>
    ),
  },
  {
    label: "Texture",
    className: "mt-[18px] bg-[#2b2b2b] text-[#cf6b76]",
    icon: (
      <Svg>
        <path d="M1.500 1.500h13v13h-13z" />
        <path
          d="M4 1h3v3H4zM10 1h3v3h-3zM1 4h3v3H1zM7 4h3v3H7zM13 4h2v3h-2zM4 7h3v3H4zM10 7h3v3h-3zM1 10h3v3H1zM7 10h3v3H7zM13 10h2v3h-2zM4 13h3v2H4zM10 13h3v2h-3z"
          fill="currentColor"
          stroke="none"
        />
      </Svg>
    ),
  },
];

function Grip() {
  return (
    <svg width="12" height="5" viewBox="0 0 12 5" aria-hidden="true" className="ml-auto">
      <path d="M0 1h12M0 4h12" stroke="#8a8a8a" strokeWidth="1" strokeDasharray="1 2" />
    </svg>
  );
}

const sceneFields = [
  { id: "camera", label: "Camera", icon: <ObjectIcon />, picker: true },
  { id: "background", label: "Background...", icon: <SceneIcon />, picker: false },
  {
    id: "clip",
    label: "Active Clip",
    icon: (
      <Svg>
        <path d="M2 7h13v7.500H2z" fill="currentColor" stroke="none" />
        <path d="M5 3.500 14.500 1.500" strokeWidth="2" strokeDasharray="2 1.200" />
        <path d="M1.500 3h2v3.500h-2z" strokeWidth=".8" />
      </Svg>
    ),
    picker: false,
  },
];

function Properties() {
  return (
    <section className="flex min-h-0 flex-1 flex-col overflow-hidden rounded bg-[#424242] text-[#dcdcdc]">
      <div className="flex h-[25px] shrink-0 items-center bg-[#383838] pr-[6px] pl-[9px]">
        <button aria-label="Editor type" className="flex h-[18px] w-[30px] items-center justify-center gap-[3px] rounded bg-[#2b2b2b]">
          <Svg>
            <rect x="1.500" y="1.500" width="13" height="5" rx="2.500" />
            <rect x="1.500" y="9.500" width="13" height="5" rx="2.500" />
            <path d="M4 1.500h5v5H4a2.500 2.500 0 0 1 0-5ZM4 9.500h3v5H4a2.500 2.500 0 0 1 0-5ZM11 9.500h1a2.500 2.500 0 0 1 0 5h-1Z" fill="currentColor" />
          </Svg>
          <Chevron />
        </button>
        <label className="ml-6 flex h-[18px] flex-1 items-center rounded bg-[#1d1d1d] pl-1">
          <SearchIcon />
          <input aria-label="Search properties" className="w-full min-w-0 bg-transparent px-1 outline-none" />
        </label>
        <button aria-label="Options" className="ml-[20px] flex h-[18px] w-[18px] items-center justify-center rounded bg-[#2b2b2b]">
          <Chevron />
        </button>
      </div>
      <div className="flex min-h-0 flex-1">
        <div className="flex w-[27px] shrink-0 flex-col bg-[#232323] pl-px">
          {propertyTabs.map((tab) => (
            <button
              key={tab.label}
              aria-label={tab.label}
              className={`flex h-[26px] w-full shrink-0 items-center justify-center rounded-l ${tab.className}`}
            >
              {tab.icon}
            </button>
          ))}
        </div>
        <div className="min-w-0 flex-1">
          <div className="flex h-9 items-center pr-[7px] pl-[10px] whitespace-nowrap">
            <SceneIcon />
            <span className="ml-2">Scen</span>
            <LayersIcon className="ml-[22px]" />
            <span className="ml-2">View L...</span>
            <Svg className="ml-auto text-[#8f8f8f]">
              <path d="M9.500 1.500 14.500 6.500 13 7l-2.500 2.500-.5 3L4 6.500l3-.5L9.500 3.500ZM6.500 9.500 1.500 14.500" strokeWidth="1.100" />
            </Svg>
          </div>
          <div className="flex h-6 items-center pr-[5px] pl-[9px] text-xs/[18px]">
            <Triangle className="rotate-90 text-[#a6a6a6]" />
            <span className="ml-[6px] pt-px">Scene</span>
            <Grip />
          </div>
          <div className="flex flex-col gap-[6px] bg-[#383838] pt-[9px] pr-[6px] pb-[8px]">
            {sceneFields.map((f) => (
              <div key={f.id} className="flex h-[19px] items-center">
                <label htmlFor={f.id} className="w-[74px] shrink-0 text-right whitespace-nowrap">
                  {f.label}
                </label>
                <span className="ml-[10px] flex h-[19px] min-w-0 flex-1 items-center rounded border border-[#303030] bg-[#1d1d1d] px-[2px]">
                  {f.icon}
                  <input id={f.id} className="w-full min-w-0 bg-transparent px-1 outline-none" />
                  {f.picker && (
                    <Svg className="text-[#b5b5b5]">
                      <path d="M2 14.500 3 11.500 8.500 6l2 2L5 13.500Z" />
                      <path d="M8 4.500 11.500 8M9.500 6.500 13 3" strokeWidth="2.600" strokeLinecap="round" />
                    </Svg>
                  )}
                </span>
              </div>
            ))}
          </div>
          {["Units", "Gravity", "Keying Sets", "Audio", "Rigid Body World", "Custom Properties"].map((name) => (
            <div key={name} className="flex h-6 items-center pr-[5px] pl-[9px] text-xs/[18px]">
              <Triangle className="text-[#a6a6a6]" />
              {name === "Gravity" ? (
                <label className="ml-[5px] flex items-center gap-1">
                  <span className="relative flex">
                    <input type="checkbox" defaultChecked className="h-3 w-3 appearance-none rounded-xs bg-[#5680c2]" />
                    <svg width="12" height="12" viewBox="0 0 12 12" fill="none" stroke="#fff" strokeWidth="1.600" className="pointer-events-none absolute inset-0" aria-hidden="true">
                      <path d="M2.500 6 5 8.800 9.500 3" />
                    </svg>
                  </span>
                  <span className="pt-px">{name}</span>
                </label>
              ) : (
                <span className="ml-[6px] pt-px">{name}</span>
              )}
              <Grip />
            </div>
          ))}
        </div>
      </div>
    </section>
  );
}

/* ---------- status bar ---------- */

function Mouse({ button, drag }: { button: "left" | "middle" | "right"; drag?: boolean }) {
  return (
    <svg width="18" height="16" viewBox="0 0 18 16" fill="none" stroke="currentColor" aria-hidden="true" className="shrink-0">
      <rect x="1.500" y="1.500" width="10" height="13" rx="3.500" />
      {button === "left" && <path d="M1 7V4Q1 1 4 1H6V7Z" fill="currentColor" stroke="none" />}
      {button === "middle" && <path d="M5 3.500h3V8H5z" fill="currentColor" stroke="none" />}
      {button === "right" && <path d="M12 7V4Q12 1 9 1H7V7Z" fill="currentColor" stroke="none" />}
      {drag && <path d="M13 .5q2 4 0 8M16.500 2v5" />}
    </svg>
  );
}

function StatusBar() {
  return (
    <footer className="flex h-5 shrink-0 items-center bg-[#303030] pr-[6px] pl-2 text-[#a8a8a8]">
      <div className="flex w-[236px] items-center">
        <Mouse button="left" />
        <span className="ml-[5px]">Set 3D Cursor</span>
        <span className="ml-[10px] flex items-center gap-[7px]">
          <Mouse button="left" drag />
          Box Select
        </span>
      </div>
      <div className="flex w-[236px] items-center gap-[5px]">
        <Mouse button="middle" />
        Rotate View
      </div>
      <div className="flex items-center">
        <Mouse button="right" />
        <span className="ml-[5px]">Select</span>
        <span className="ml-[10px] flex items-center gap-[7px]">
          <Mouse button="right" drag />
          Move
        </span>
      </div>
      <span className="ml-auto">2.92.0</span>
    </footer>
  );
}

export default function App() {
  return (
    <div className="flex h-screen flex-col overflow-hidden bg-[#232323] font-['DejaVu_Sans_Condensed','DejaVu_Sans',sans-serif] text-[11px] leading-[17px] select-none">
      <TopBar />
      <main className="flex min-h-0 flex-1 gap-1 pb-px">
        <div className="flex min-w-0 flex-1 flex-col gap-[3px]">
          <Viewport />
          <Timeline />
        </div>
        <aside className="flex w-[216px] shrink-0 flex-col gap-[3px]">
          <Outliner />
          <Properties />
        </aside>
      </main>
      <StatusBar />
    </div>
  );
}
